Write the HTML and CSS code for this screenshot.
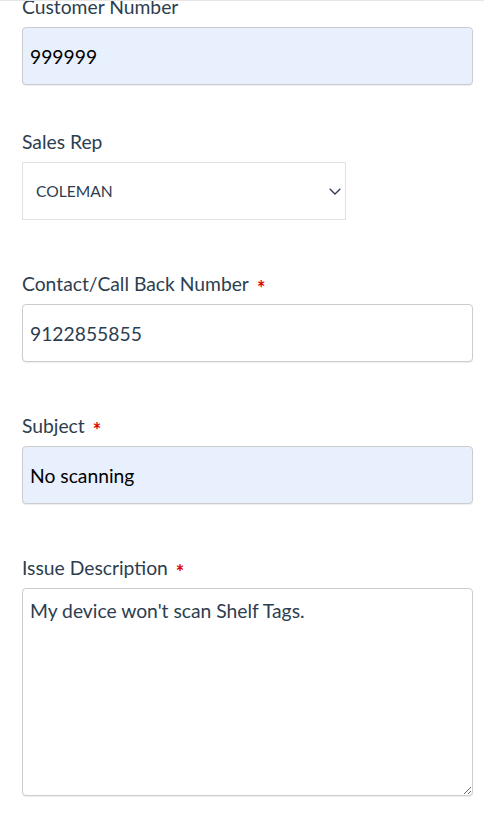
FILE: index.html
```html
<!DOCTYPE html>
<html lang="en">
<head>
<meta charset="utf-8">
<title>Support Request</title>
<link rel="stylesheet" href="styles.css">
</head>
<body>
<div class="topline"></div>
<form class="form">
  <div class="group group-first">
    <label class="label">Customer Number</label>
    <input class="field autofill" type="text" value="999999">
  </div>
  <div class="group">
    <label class="label">Sales Rep</label>
    <div class="select">
      <span class="select-value">COLEMAN</span>
      <svg class="chevron" width="12" height="7" viewBox="0 0 12 7"><path d="M0.7 0.7 L6 6 L11.3 0.7" fill="none" stroke="#2c3e50" stroke-width="1.3"/></svg>
    </div>
  </div>
  <div class="group">
    <label class="label">Contact/Call Back Number<span class="req">*</span></label>
    <input class="field" type="text" value="9122855855">
  </div>
  <div class="group">
    <label class="label">Subject<span class="req">*</span></label>
    <input class="field autofill" type="text" value="No scanning">
  </div>
  <div class="group">
    <label class="label">Issue Description<span class="req">*</span></label>
    <textarea class="field area">My device won't scan Shelf Tags.</textarea>
  </div>
</form>
</body>
</html>
```

FILE: styles.css
```css
html, body {
  margin: 0;
  padding: 0;
  background: #fff;
  overflow: hidden;
}
body {
  font-family: "Lato", "Liberation Sans", sans-serif;
  color: #2c3e50;
}
.topline {
  position: fixed;
  top: 0;
  left: 0;
  right: 0;
  height: 1px;
  background: #e6e6e6;
}
.form {
  margin-top: -8px;
  padding: 0 11px 0 22px;
}
.group {
  display: flex;
  flex-direction: column;
  gap: 5px;
  margin-bottom: 49px;
}
.group-first {
  margin-bottom: 42px;
}
.label {
  font-size: 19.3px;
  line-height: 30px;
  color: #2c3e50;
}
.req {
  color: #e00000;
  font-size: 20px;
  font-weight: 700;
  margin-left: 8px;
  vertical-align: -5px;
  line-height: 0;
}
.field {
  box-sizing: border-box;
  width: 451px;
  height: 58px;
  border: 1px solid #cccccc;
  border-radius: 4px;
  padding: 0 7px;
  font-family: inherit;
  font-size: 19.3px;
  color: #2c3e50;
  background: #fff;
  outline: none;
  box-shadow: 0 1px 1px rgba(0,0,0,0.07);
}
.autofill {
  background: #e8f0fe;
  color: #000;
}
.select {
  box-sizing: border-box;
  width: 324px;
  height: 58px;
  border: 1px solid #dfe3e8;
  display: flex;
  align-items: center;
  justify-content: space-between;
  padding: 0 4px 0 13px;
}
.select-value {
  font-size: 15.6px;
  color: #2c3e50;
}
.chevron {
  display: block;
  margin-top: 1px;
}
.area {
  height: 208px;
  padding: 7px 7px;
  line-height: 30px;
  resize: vertical;
}
```
